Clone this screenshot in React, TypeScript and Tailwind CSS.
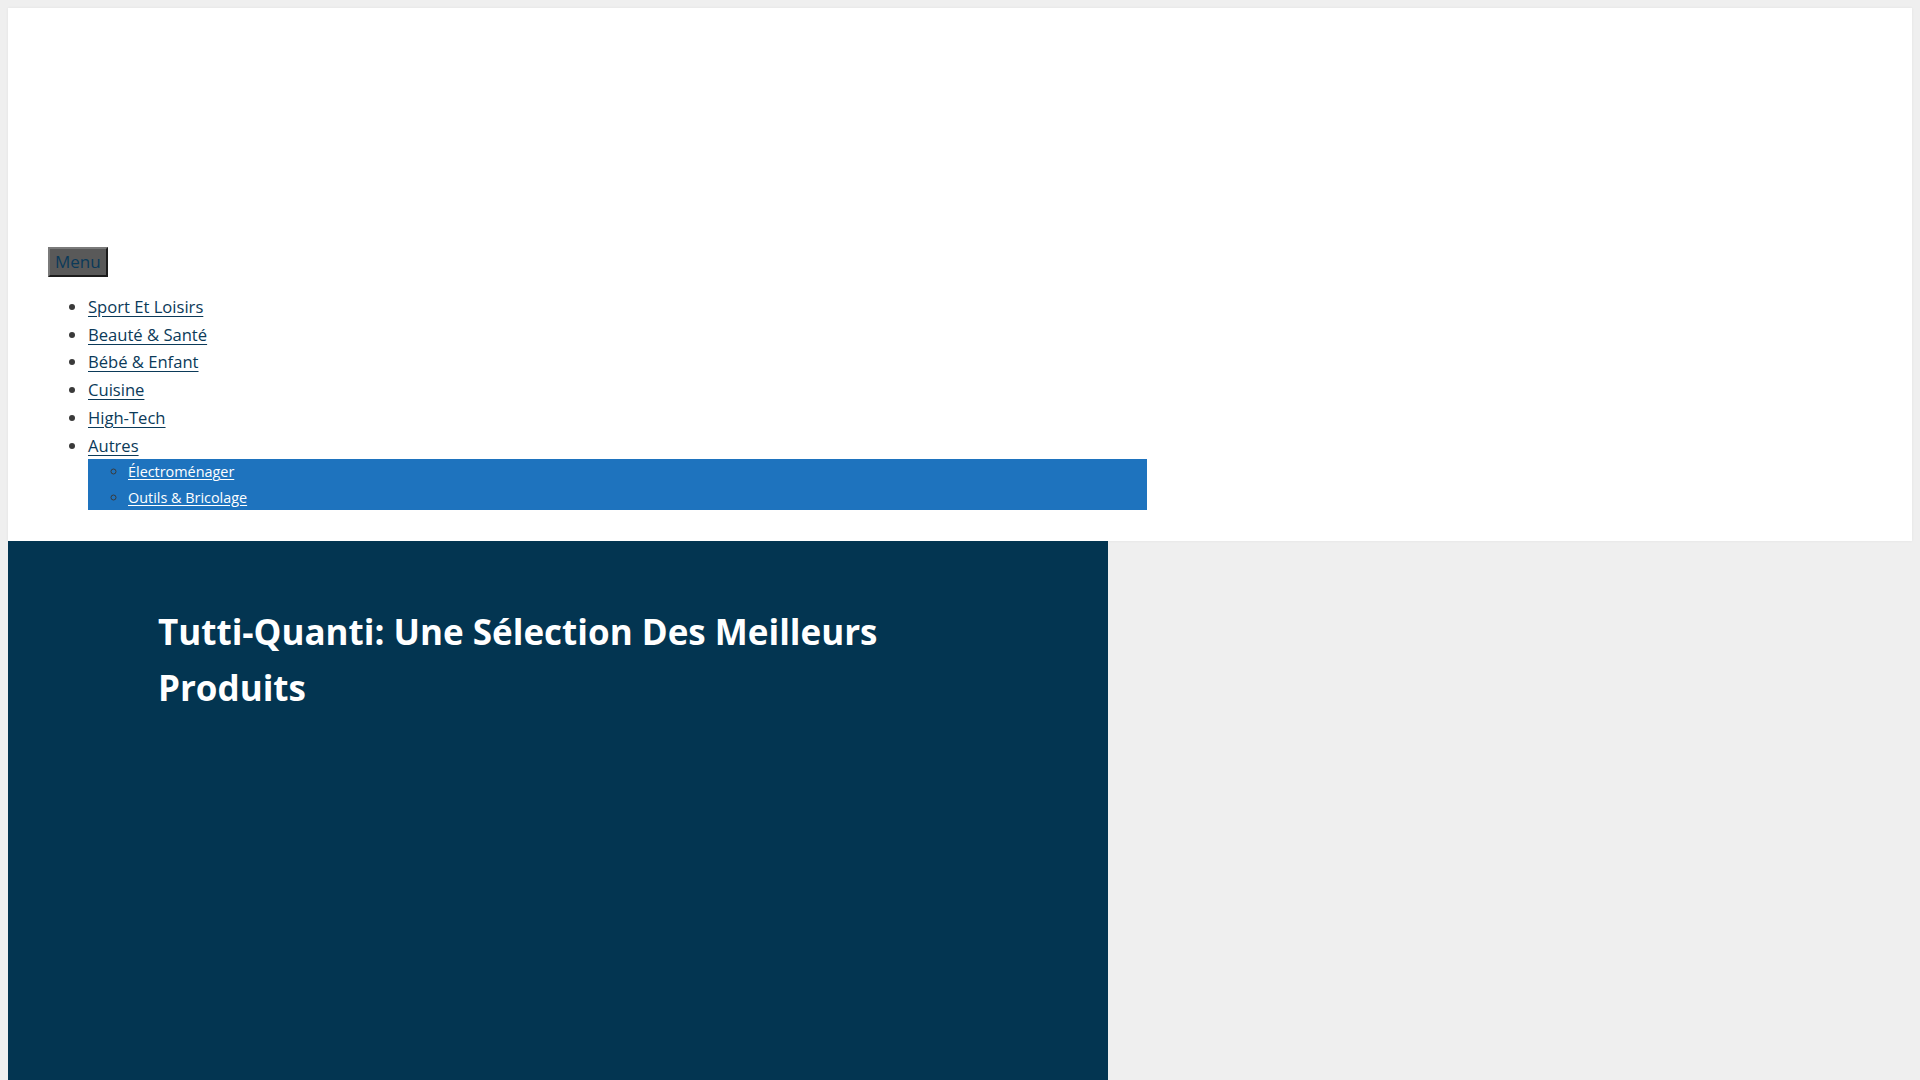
import React from 'react';

const mainLinks = ['Sport Et Loisirs', 'Beauté & Santé', 'Bébé & Enfant', 'Cuisine', 'High-Tech'];
const subLinks = ['Électroménager', 'Outils & Bricolage'];

const App: React.FC = () => {
  return (
    <div className="min-h-screen bg-[#efefef] px-2 pt-2 font-['Open_Sans',sans-serif] text-[#3a3a3a]">
      <header className="bg-white px-10 pt-[239px] pb-[31px] shadow-[0_0_3px_rgba(0,0,0,0.06)]">
        <button className="h-[30px] border-2 border-t-[#7a7a7a] border-l-[#7a7a7a] border-r-[#1c1c1c] border-b-[#1c1c1c] bg-[#595959] px-[5px] text-[17px] leading-[24px] text-[#0b3a59]">
          Menu
        </button>
        <ul className="mt-[16px] list-disc pl-10 text-[16.6px] leading-[27.7px] marker:text-[#3a3a3a]">
          {mainLinks.map((l) => (
            <li key={l}>
              <a href="#" className="text-[#0b3a59] underline underline-offset-[3px]">
                {l}
              </a>
            </li>
          ))}
          <li>
            <a href="#" className="text-[#0b3a59] underline underline-offset-[3px]">
              Autres
            </a>
            <ul className="w-[1059px] list-[circle] bg-[#1e73be] pl-10 text-[14.4px] leading-[25.5px] marker:text-[#3a3a3a]">
              {subLinks.map((l) => (
                <li key={l}>
                  <a href="#" className="text-white underline underline-offset-2">
                    {l}
                  </a>
                </li>
              ))}
            </ul>
          </li>
        </ul>
      </header>
      <section className="h-[540px] w-[1100px] bg-[#033551] px-[150px] pt-[63px]">
        <h1 className="text-[35px] font-bold leading-[56px] text-white">
          Tutti-Quanti: Une Sélection Des Meilleurs Produits
        </h1>
      </section>
    </div>
  );
};

export default App;
